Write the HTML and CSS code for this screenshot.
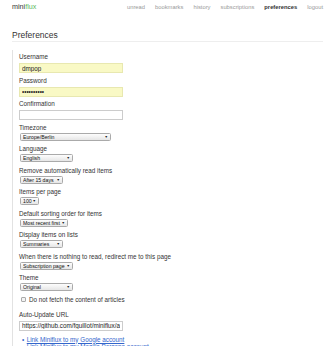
FILE: index.html
```html
<!DOCTYPE html>
<html lang="en">
<head>
  <meta charset="UTF-8">
  <meta name="viewport" content="width=device-width, initial-scale=1.0">
  <title>Preferences - miniflux</title>
  <link rel="stylesheet" href="styles.css">
</head>
<body>
  <header class="header">
    <div class="logo">mini<span>flux</span></div>
    <nav class="menu">
      <a href="#">unread</a>
      <a href="#">bookmarks</a>
      <a href="#">history</a>
      <a href="#">subscriptions</a>
      <a href="#" class="active">preferences</a>
      <a href="#">logout</a>
    </nav>
  </header>

  <section class="page">
    <h1 class="page-title">Preferences</h1>

    <form class="prefs">
      <label>Username</label>
      <input type="text" class="autofill" value="dmpop">

      <label>Password</label>
      <input type="password" class="autofill" value="miniflux12">

      <label>Confirmation</label>
      <input type="password" value="">

      <label>Timezone</label>
      <span class="select sel-xl"><select><option>Europe/Berlin</option></select></span>

      <label>Language</label>
      <span class="select sel-l"><select><option>English</option></select></span>

      <label>Remove automatically read items</label>
      <span class="select sel-m"><select><option>After 15 days</option></select></span>

      <label>Items per page</label>
      <span class="select sel-s"><select><option>100</option></select></span>

      <label>Default sorting order for items</label>
      <span class="select sel-ml"><select><option>Most recent first</option></select></span>

      <label>Display items on lists</label>
      <span class="select sel-m"><select><option>Summaries</option></select></span>

      <label>When there is nothing to read, redirect me to this page</label>
      <span class="select sel-l"><select><option>Subscription page</option></select></span>

      <label>Theme</label>
      <span class="select sel-l"><select><option>Original</option></select></span>

      <div class="check-row">
        <input type="checkbox" id="nocontent">
        <span>Do not fetch the content of articles</span>
      </div>

      <label>Auto-Update URL</label>
      <input type="text" value="https://github.com/fguillot/miniflux/archive/master.zip">

      <ul class="links">
        <li><a href="#">Link Miniflux to my Google account</a></li>
        <li><a href="#">Link Miniflux to my Mozilla Persona account</a></li>
      </ul>
    </form>
  </section>
</body>
</html>
```

FILE: styles.css
```css
body {
  font-family: 'Liberation Sans', Arial, sans-serif;
  color: #333;
  margin: 0;
  padding: 0;
  background: #fff;
}
.header {
  display: flex;
  align-items: center;
  justify-content: space-between;
  padding: 3px 12px 0 12px;
  height: 8px;
  line-height: 8px;
}
.logo {
  font-size: 7.2px;
  color: #333;
}
.logo span {
  color: #5cb85c;
}
.menu {
  display: flex;
  gap: 10px;
  font-size: 5.8px;
}
.menu a {
  color: #999;
  text-decoration: none;
}
.menu a.active {
  color: #333;
  font-weight: bold;
}
.page {
  padding: 0 12px;
}
.page-title {
  font-size: 8.5px;
  font-weight: normal;
  line-height: 10px;
  margin: 19px 0 0 0;
  padding-bottom: 1px;
  border-bottom: 1px solid #eee;
}
.prefs {
  margin-top: 8px;
  border-left: 1px solid #e2e2e2;
  padding: 3px 0 0 6px;
  font-size: 6.3px;
}
.prefs label {
  display: block;
  line-height: 8px;
  color: #333;
}
.prefs input[type="text"],
.prefs input[type="password"] {
  display: block;
  box-sizing: border-box;
  width: 104px;
  height: 10px;
  margin: 2px 0 3.5px 0;
  padding: 0 2px;
  border: 1px solid #ccc;
  font-family: inherit;
  font-size: 6.3px;
  color: #222;
  background: #fff;
  outline: none;
}
.prefs input.autofill {
  background: #f9f9c5;
  border-color: #e8e8b0;
}
.select {
  display: block;
  position: relative;
  height: 8px;
  margin: 1px 0 4.5px 1px;
}
.select select {
  appearance: none;
  -webkit-appearance: none;
  box-sizing: border-box;
  width: 100%;
  height: 8px;
  margin: 0;
  padding: 0 0 0 2px;
  border: 1px solid #aaa;
  border-radius: 1.5px;
  background: linear-gradient(#fdfdfd, #e6e6e6);
  font-family: inherit;
  font-size: 5.2px;
  line-height: 6px;
  color: #111;
}
.select::after {
  content: "\25BC";
  position: absolute;
  right: 3px;
  top: 2px;
  font-size: 3.5px;
  line-height: 4px;
  color: #222;
  pointer-events: none;
}
.sel-xl { width: 91px; }
.sel-l { width: 53px; }
.sel-ml { width: 48px; }
.sel-m { width: 43px; }
.sel-s { width: 19px; }
.check-row {
  display: flex;
  align-items: center;
  gap: 3px;
  margin: 2.5px 0 7px 2px;
  line-height: 8px;
}
.check-row input {
  appearance: none;
  -webkit-appearance: none;
  width: 5px;
  height: 5px;
  margin: 0;
  border: 1px solid #aaa;
  border-radius: 1px;
  background: #f4f4f4;
  box-sizing: border-box;
}
.links {
  margin: 5px 0 0 0;
  padding: 0 0 0 3px;
  list-style: none;
  line-height: 7px;
}
.links li::before {
  content: "\2022";
  color: #3366cc;
  margin-right: 2.5px;
}
.links a {
  color: #3366cc;
}
```
